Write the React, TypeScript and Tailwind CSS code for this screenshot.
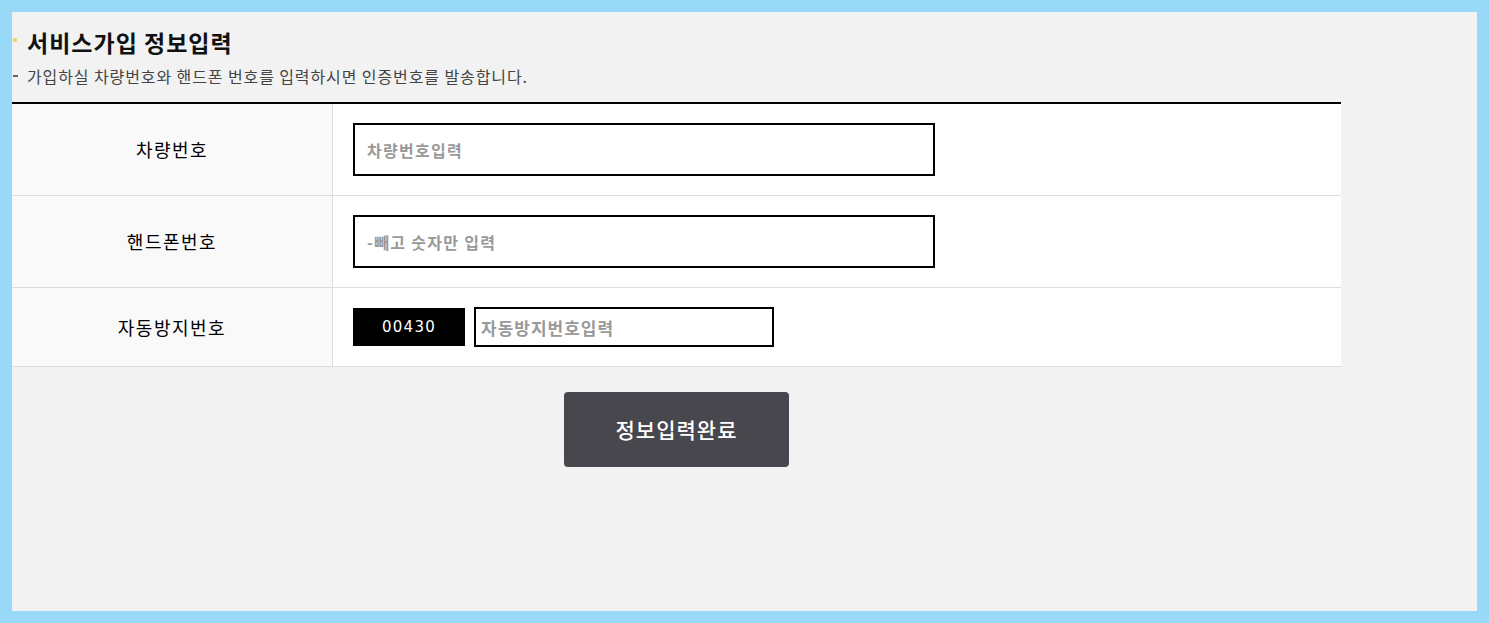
import React from "react";

const font = { fontFamily: '"Noto Sans CJK KR", "Noto Sans", sans-serif' };

function Row({ label, children, last }: { label: string; children: React.ReactNode; last?: boolean }) {
  return (
    <div className={`flex border-b border-[#dddddd] ${last ? "h-[79px]" : "h-[92px]"}`}>
      <div className="w-[321px] shrink-0 bg-[#f9f9f9] border-r border-[#dddddd] flex items-center justify-center text-[18px] tracking-[1.5px] text-black font-normal">
        {label}
      </div>
      <div className="flex-1 bg-white flex items-center pl-[20px]">{children}</div>
    </div>
  );
}

export default function App() {
  return (
    <div className="w-[1489px] h-[623px] bg-[#97d9f6] p-[12px]" style={font}>
      <div className="w-full h-full bg-[#f2f2f2] flex flex-col">
        <div className="pt-[27px] flex items-center h-[33px]">
          <span className="w-[4px] h-[4px] rounded-full bg-[#f5d34a] ml-[1px] mr-[10px] -mt-[4px]" />
          <h1 className="text-[23px] tracking-[1px] font-bold text-[#111] leading-none">서비스가입 정보입력</h1>
        </div>
        <div className="flex items-center mt-[21px] h-[20px]">
          <span className="w-[5px] h-[2px] bg-[#666] ml-[1px] mr-[9px]" />
          <p className="text-[16px] tracking-[0.9px] text-[#444] leading-none">가입하실 차량번호와 핸드폰 번호를 입력하시면 인증번호를 발송합니다.</p>
        </div>
        <div className="w-[1329px] mt-[16px] border-t-2 border-black">
          <Row label="차량번호">
            <input
              className="w-[582px] h-[53px] border-2 border-black bg-white px-[12px] text-[16px] tracking-[1.3px] font-bold placeholder:text-[#999] outline-none"
              placeholder="차량번호입력"
              style={font}
            />
          </Row>
          <Row label="핸드폰번호">
            <input
              className="w-[582px] h-[53px] border-2 border-black bg-white px-[12px] text-[16px] tracking-[1.3px] font-bold placeholder:text-[#999] outline-none"
              placeholder="-빼고 숫자만 입력"
              style={font}
            />
          </Row>
          <Row label="자동방지번호" last>
            <div className="w-[112px] h-[38px] bg-black flex items-center justify-center text-white text-[15px] tracking-[1.3px]" style={{ fontFamily: '"DejaVu Sans", sans-serif' }}>
              00430
            </div>
            <input
              className="ml-[9px] w-[300px] h-[40px] border-2 border-black bg-white px-[5px] text-[17px] tracking-[1px] font-bold placeholder:text-[#999] outline-none"
              placeholder="자동방지번호입력"
              style={font}
            />
          </Row>
        </div>
        <div className="w-[1329px] flex justify-center mt-[25px]">
          <button className="w-[225px] h-[75px] bg-[#48474d] rounded-[4px] text-white text-[21px] tracking-[1px] font-medium" style={font}>
            정보입력완료
          </button>
        </div>
      </div>
    </div>
  );
}
